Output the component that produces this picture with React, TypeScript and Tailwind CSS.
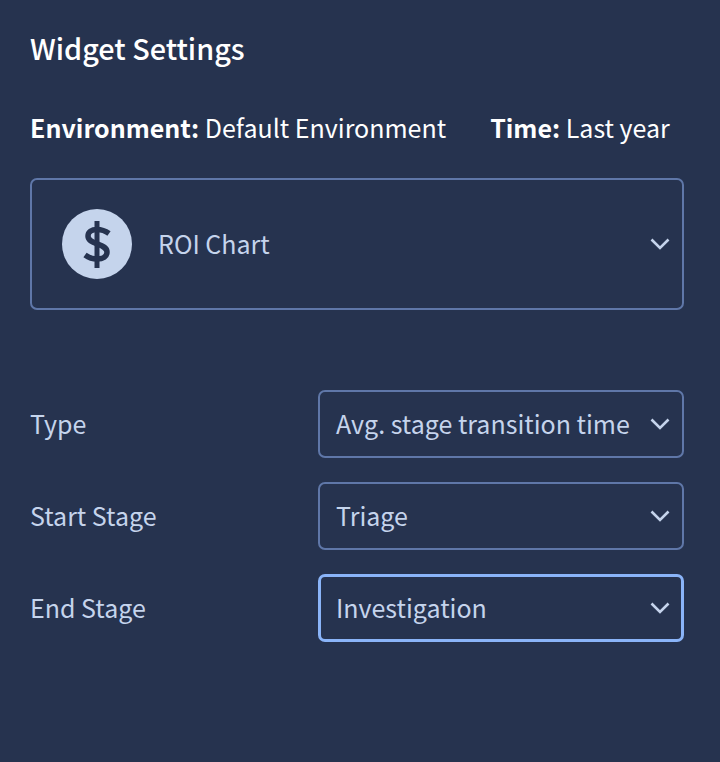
function Chevron() {
  return (
    <svg width="20" height="12" viewBox="0 0 20 12" fill="none" className="shrink-0 text-[#c5d4ec]">
      <path d="M1.500 1.500l8.500 8.500 8.500-8.500" stroke="currentColor" strokeWidth="2.600" />
    </svg>
  );
}

function Select({ label, value, focused }: { label: string; value: string; focused?: boolean }) {
  return (
    <div className="flex items-center">
      <div className="w-[288px] pb-[2px] text-[25px] leading-[36px] text-[#c5d4ec]">{label}</div>
      <div
        className={
          focused
            ? "flex h-[68px] w-[366px] items-center justify-between rounded-[7px] border-[3px] border-[#8ab4f8] pl-[15px] pr-[11px]"
            : "flex h-[68px] w-[366px] items-center justify-between rounded-[7px] border-2 border-[#5f77a8] pl-[16px] pr-[12px]"
        }
      >
        <span className="pb-[2px] text-[25px] leading-[36px] text-[#c5d4ec]">{value}</span>
        <Chevron />
      </div>
    </div>
  );
}

export default function App() {
  return (
    <div className="h-[762px] w-[720px] bg-[#26334f] pl-[30px] pr-[36px] pt-[28px] font-['Noto_Sans_CJK_JP','Open_Sans',sans-serif]">
      <h1 className="text-[28.8px] leading-[40px] font-medium text-white">Widget Settings</h1>
      <div className="mt-[42px] flex gap-[44px] whitespace-nowrap text-[25px] leading-[34px] text-white">
        <div>
          <span className="font-bold">Environment:</span> Default Environment
        </div>
        <div>
          <span className="font-bold">Time:</span> Last year
        </div>
      </div>
      <div className="mt-[34px] flex h-[132px] items-center justify-between rounded-[7px] border-2 border-[#5f77a8] pl-[30px] pr-[12px]">
        <div className="flex items-center gap-[26px]">
          <div className="flex h-[70px] w-[70px] items-center justify-center rounded-full bg-[#c5d4ec]">
            <svg width="28" height="47" viewBox="0 0 28 47" fill="none" className="text-[#26334f]">
              <path d="M14 0v47" stroke="currentColor" strokeWidth="5" />
              <path
                d="M26 12.500c-3.500-2.500-7.500-4-12-4-5.500 0-9 2.500-9 6.500 0 4.500 4.500 6 9.500 8s9.500 3.500 9.500 8c0 4.500-4 7-10 7-4.500 0-8.500-1.500-12-4"
                stroke="currentColor"
                strokeWidth="5.500"
              />
            </svg>
          </div>
          <span className="pb-[2px] text-[25px] leading-[36px] text-[#c5d4ec]">ROI Chart</span>
        </div>
        <Chevron />
      </div>
      <div className="mt-[80px] flex flex-col gap-[24px]">
        <Select label="Type" value="Avg. stage transition time" />
        <Select label="Start Stage" value="Triage" />
        <Select label="End Stage" value="Investigation" focused />
      </div>
    </div>
  );
}
